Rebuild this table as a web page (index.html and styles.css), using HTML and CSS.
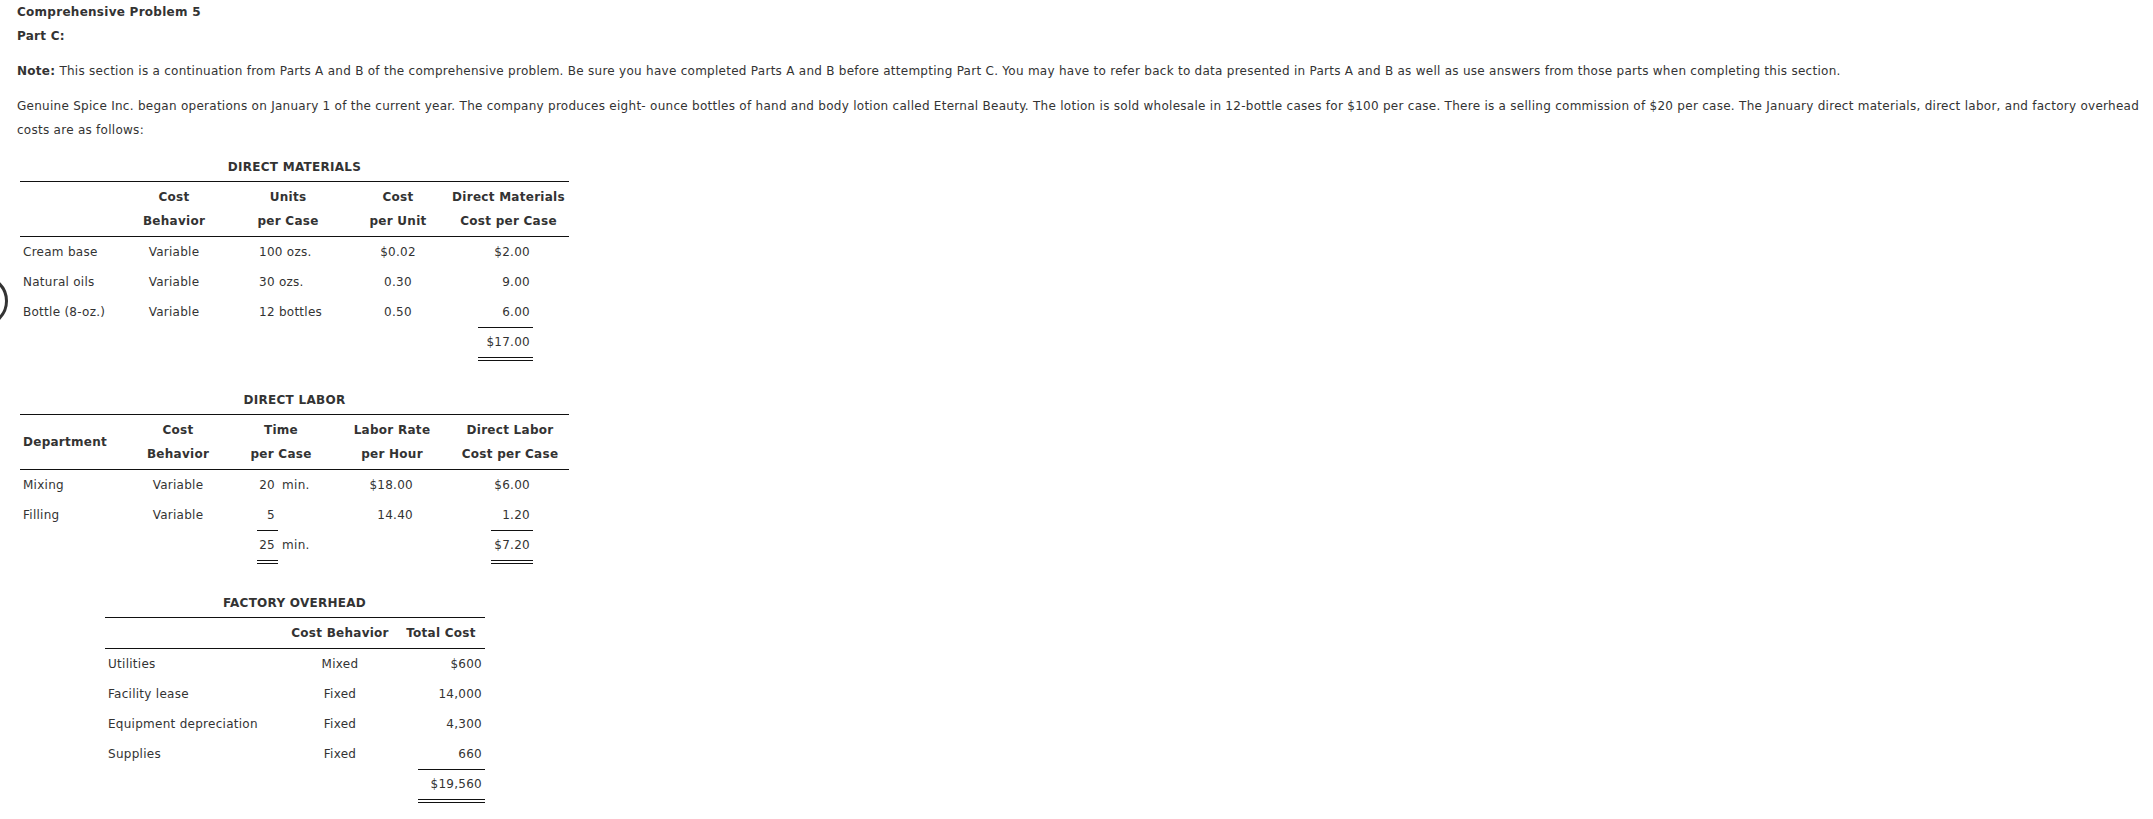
FILE: index.html
```html
<!DOCTYPE html>
<html lang="en">
<head>
  <meta charset="UTF-8">
  <title>Comprehensive Problem 5 - Part C</title>
  <link rel="stylesheet" href="styles.css">
</head>
<body>

  <!-- leftover circle from the page edge -->
  <div class="edge-circle"></div>

  <div class="page">
    <p class="heading">Comprehensive Problem 5</p>
    <p class="heading">Part C:</p>

    <p class="para"><b>Note:</b> This section is a continuation from Parts A and B of the comprehensive problem. Be sure you have completed Parts A and B before attempting Part C. You may have to refer back to data presented in Parts A and B as well as use answers from those parts when completing this section.</p>

    <p class="para">Genuine Spice Inc. began operations on January 1 of the current year. The company produces eight- ounce bottles of hand and body lotion called Eternal Beauty. The lotion is sold wholesale in 12-bottle cases for $100 per case. There is a selling commission of $20 per case. The January direct materials, direct labor, and factory overhead costs are as follows:</p>

    <!-- Direct materials -->
    <div class="block first">
      <div class="caption">DIRECT MATERIALS</div>
      <table class="cost-table materials">
        <colgroup>
          <col style="width:100px"><col style="width:108px"><col style="width:120px"><col style="width:100px"><col style="width:121px">
        </colgroup>
        <thead>
          <tr>
            <th></th>
            <th>Cost<br>Behavior</th>
            <th>Units<br>per Case</th>
            <th>Cost<br>per Unit</th>
            <th>Direct Materials<br>Cost per Case</th>
          </tr>
        </thead>
        <tbody>
          <tr>
            <td class="name">Cream base</td>
            <td class="mid">Variable</td>
            <td class="units">100 ozs.</td>
            <td class="mid">$0.02</td>
            <td class="amt"><span class="fig">$2.00</span></td>
          </tr>
          <tr>
            <td class="name">Natural oils</td>
            <td class="mid">Variable</td>
            <td class="units">30 ozs.</td>
            <td class="mid">0.30</td>
            <td class="amt"><span class="fig">9.00</span></td>
          </tr>
          <tr>
            <td class="name">Bottle (8-oz.)</td>
            <td class="mid">Variable</td>
            <td class="units">12 bottles</td>
            <td class="mid">0.50</td>
            <td class="amt"><span class="fig rule">6.00</span></td>
          </tr>
          <tr>
            <td></td><td></td><td></td><td></td>
            <td class="amt"><span class="fig total">$17.00</span></td>
          </tr>
        </tbody>
      </table>
    </div>

    <!-- Direct labor -->
    <div class="block">
      <div class="caption">DIRECT LABOR</div>
      <table class="cost-table labor">
        <colgroup>
          <col style="width:107px"><col style="width:102px"><col style="width:104px"><col style="width:118px"><col style="width:118px">
        </colgroup>
        <thead>
          <tr>
            <th class="dept">Department</th>
            <th>Cost<br>Behavior</th>
            <th>Time<br>per Case</th>
            <th>Labor Rate<br>per Hour</th>
            <th>Direct Labor<br>Cost per Case</th>
          </tr>
        </thead>
        <tbody>
          <tr>
            <td class="name">Mixing</td>
            <td class="mid">Variable</td>
            <td class="time"><span class="num">20</span> min.</td>
            <td class="rate">$18.00</td>
            <td class="amt"><span class="fig">$6.00</span></td>
          </tr>
          <tr>
            <td class="name">Filling</td>
            <td class="mid">Variable</td>
            <td class="time"><span class="num rule">5</span></td>
            <td class="rate">14.40</td>
            <td class="amt"><span class="fig rule">1.20</span></td>
          </tr>
          <tr>
            <td></td><td></td>
            <td class="time"><span class="num total">25</span> min.</td>
            <td></td>
            <td class="amt"><span class="fig total">$7.20</span></td>
          </tr>
        </tbody>
      </table>
    </div>

    <!-- Factory overhead -->
    <div class="block">
      <div class="caption">FACTORY OVERHEAD</div>
      <table class="cost-table overhead">
        <colgroup>
          <col style="width:178px"><col style="width:114px"><col style="width:88px">
        </colgroup>
        <thead>
          <tr>
            <th></th>
            <th>Cost Behavior</th>
            <th>Total Cost</th>
          </tr>
        </thead>
        <tbody>
          <tr>
            <td class="name">Utilities</td>
            <td class="mid">Mixed</td>
            <td class="amt"><span class="fig">$600</span></td>
          </tr>
          <tr>
            <td class="name">Facility lease</td>
            <td class="mid">Fixed</td>
            <td class="amt"><span class="fig">14,000</span></td>
          </tr>
          <tr>
            <td class="name">Equipment depreciation</td>
            <td class="mid">Fixed</td>
            <td class="amt"><span class="fig">4,300</span></td>
          </tr>
          <tr>
            <td class="name">Supplies</td>
            <td class="mid">Fixed</td>
            <td class="amt"><span class="fig rule">660</span></td>
          </tr>
          <tr>
            <td></td><td></td>
            <td class="amt"><span class="fig total">$19,560</span></td>
          </tr>
        </tbody>
      </table>
    </div>
  </div>

</body>
</html>
```

FILE: styles.css
```css
/* Basic reset */
* {
  margin: 0;
  padding: 0;
  box-sizing: border-box;
}

body {
  font-family: "DejaVu Sans", Verdana, sans-serif;
  font-size: 12px;
  line-height: 24px;
  letter-spacing: 0.27px;
  color: #333;
  background-color: #fff;
  position: relative;
}

.page {
  padding-left: 17px;
  padding-bottom: 20px;
}

.heading {
  font-weight: bold;
}

.para {
  margin-top: 11px;
}

/* Each table block is centred on the width of the first table */
.block {
  width: 552px;
  margin-top: 33px;
  display: flex;
  flex-direction: column;
  align-items: flex-end;
}

.block.first {
  margin-top: 15px;
}

.caption {
  align-self: stretch;
  padding-left: 3px;
  text-align: center;
  font-weight: bold;
  line-height: 20px;
  margin-bottom: 4px;
}

.cost-table {
  border-collapse: collapse;
  table-layout: fixed;
  border-top: 1px solid #111;
}

.materials,
.labor {
  width: 549px;
}

.overhead {
  width: 380px;
  margin-right: 84px;
}

.cost-table th {
  font-weight: bold;
  text-align: center;
  line-height: 24px;
  padding: 3px 0;
  border-bottom: 1px solid #111;
  vertical-align: middle;
}

.cost-table th.dept {
  text-align: left;
  padding-left: 3px;
}

.cost-table td {
  line-height: 30px;
  padding: 0;
  white-space: nowrap;
  vertical-align: top;
}

.cost-table td.name {
  padding-left: 3px;
}

.cost-table td.mid {
  text-align: center;
}

.cost-table td.units {
  padding-left: 31px;
}

.cost-table td.rate {
  text-align: right;
  padding-right: 38px;
}

.cost-table td.time {
  padding-left: 28px;
}

.cost-table td.amt {
  text-align: right;
  padding-right: 36px;
}

.overhead td.amt {
  padding-right: 0;
}

/* figures that can carry a rule under them */
.fig,
.num {
  display: inline-block;
  text-align: right;
  padding-right: 3px;
  line-height: 30px;
  vertical-align: top;
}

.materials .fig {
  width: 55px;
}

.labor .fig {
  width: 42px;
}

.overhead .fig {
  width: 67px;
}

.num {
  width: 21px;
}

/* rules hang below the row so the text stays on the line */
.rule {
  border-bottom: 1px solid #111;
  margin-bottom: -1px;
}

.total {
  border-bottom: 4px double #111;
  margin-bottom: -4px;
}

.edge-circle {
  position: absolute;
  left: -44px;
  top: 275px;
  width: 52px;
  height: 52px;
  border: 3px solid #333;
  border-radius: 50%;
}
```
